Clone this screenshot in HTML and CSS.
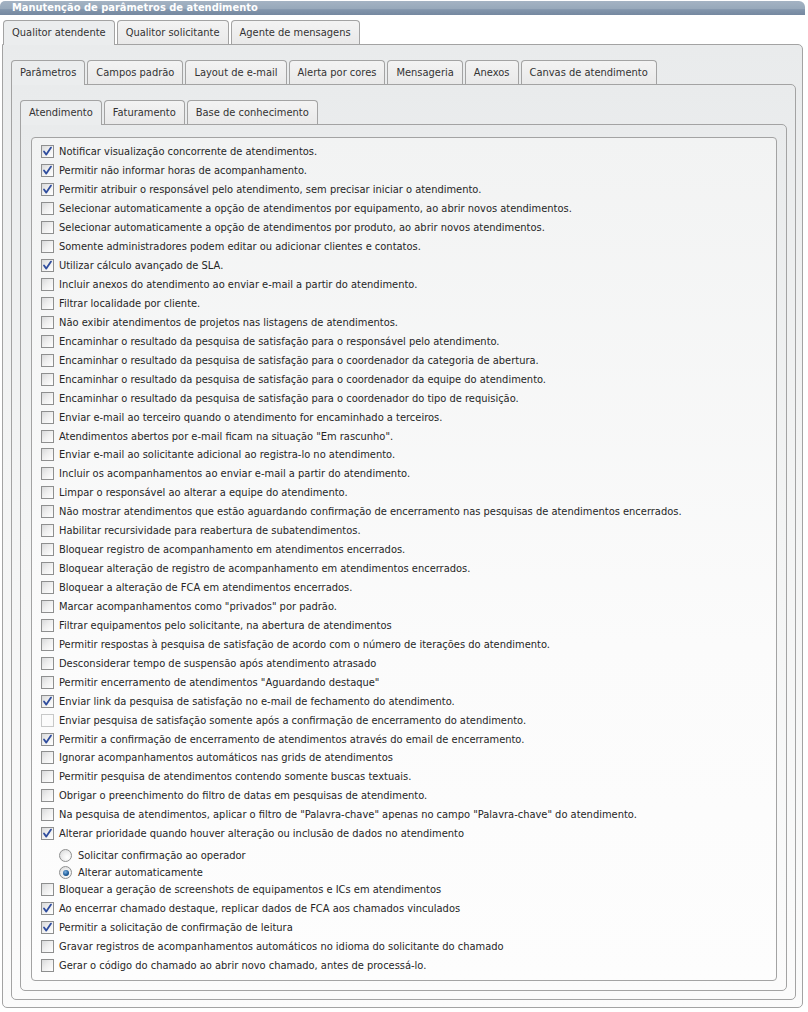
FILE: index.html
```html
<!DOCTYPE html>
<html lang="pt-BR">
<head>
<meta charset="utf-8">
<title>Manutenção de parâmetros de atendimento</title>
<link rel="stylesheet" href="styles.css">
</head>
<body>
<div class="titlebar">Manutenção de parâmetros de atendimento</div>

<div class="tabs tabs1">
  <span class="tab active">Qualitor atendente</span>
  <span class="tab">Qualitor solicitante</span>
  <span class="tab">Agente de mensagens</span>
</div>
<div class="panel panel1">
  <div class="tabs">
    <span class="tab active">Parâmetros</span>
    <span class="tab">Campos padrão</span>
    <span class="tab">Layout de e-mail</span>
    <span class="tab">Alerta por cores</span>
    <span class="tab">Mensageria</span>
    <span class="tab">Anexos</span>
    <span class="tab">Canvas de atendimento</span>
  </div>
  <div class="panel panel2">
    <div class="tabs">
      <span class="tab active">Atendimento</span>
      <span class="tab">Faturamento</span>
      <span class="tab">Base de conhecimento</span>
    </div>
    <div class="panel panel3">
      <div class="box">
        <label class="row"><span class="cb on"><svg viewBox="0 0 13 13"><path d="M3 6.5 5.3 9.6 10 2.6"/></svg></span>Notificar visualização concorrente de atendimentos.</label>
        <label class="row"><span class="cb on"><svg viewBox="0 0 13 13"><path d="M3 6.5 5.3 9.6 10 2.6"/></svg></span>Permitir não informar horas de acompanhamento.</label>
        <label class="row"><span class="cb on"><svg viewBox="0 0 13 13"><path d="M3 6.5 5.3 9.6 10 2.6"/></svg></span>Permitir atribuir o responsável pelo atendimento, sem precisar iniciar o atendimento.</label>
        <label class="row"><span class="cb"></span>Selecionar automaticamente a opção de atendimentos por equipamento, ao abrir novos atendimentos.</label>
        <label class="row"><span class="cb"></span>Selecionar automaticamente a opção de atendimentos por produto, ao abrir novos atendimentos.</label>
        <label class="row"><span class="cb"></span>Somente administradores podem editar ou adicionar clientes e contatos.</label>
        <label class="row"><span class="cb on"><svg viewBox="0 0 13 13"><path d="M3 6.5 5.3 9.6 10 2.6"/></svg></span>Utilizar cálculo avançado de SLA.</label>
        <label class="row"><span class="cb"></span>Incluir anexos do atendimento ao enviar e-mail a partir do atendimento.</label>
        <label class="row"><span class="cb"></span>Filtrar localidade por cliente.</label>
        <label class="row"><span class="cb"></span>Não exibir atendimentos de projetos nas listagens de atendimentos.</label>
        <label class="row"><span class="cb"></span>Encaminhar o resultado da pesquisa de satisfação para o responsável pelo atendimento.</label>
        <label class="row"><span class="cb"></span>Encaminhar o resultado da pesquisa de satisfação para o coordenador da categoria de abertura.</label>
        <label class="row"><span class="cb"></span>Encaminhar o resultado da pesquisa de satisfação para o coordenador da equipe do atendimento.</label>
        <label class="row"><span class="cb"></span>Encaminhar o resultado da pesquisa de satisfação para o coordenador do tipo de requisição.</label>
        <label class="row"><span class="cb"></span>Enviar e-mail ao terceiro quando o atendimento for encaminhado a terceiros.</label>
        <label class="row"><span class="cb"></span>Atendimentos abertos por e-mail ficam na situação "Em rascunho".</label>
        <label class="row"><span class="cb"></span>Enviar e-mail ao solicitante adicional ao registra-lo no atendimento.</label>
        <label class="row"><span class="cb"></span>Incluir os acompanhamentos ao enviar e-mail a partir do atendimento.</label>
        <label class="row"><span class="cb"></span>Limpar o responsável ao alterar a equipe do atendimento.</label>
        <label class="row"><span class="cb"></span>Não mostrar atendimentos que estão aguardando confirmação de encerramento nas pesquisas de atendimentos encerrados.</label>
        <label class="row"><span class="cb"></span>Habilitar recursividade para reabertura de subatendimentos.</label>
        <label class="row"><span class="cb"></span>Bloquear registro de acompanhamento em atendimentos encerrados.</label>
        <label class="row"><span class="cb"></span>Bloquear alteração de registro de acompanhamento em atendimentos encerrados.</label>
        <label class="row"><span class="cb"></span>Bloquear a alteração de FCA em atendimentos encerrados.</label>
        <label class="row"><span class="cb"></span>Marcar acompanhamentos como "privados" por padrão.</label>
        <label class="row"><span class="cb"></span>Filtrar equipamentos pelo solicitante, na abertura de atendimentos</label>
        <label class="row"><span class="cb"></span>Permitir respostas à pesquisa de satisfação de acordo com o número de iterações do atendimento.</label>
        <label class="row"><span class="cb"></span>Desconsiderar tempo de suspensão após atendimento atrasado</label>
        <label class="row"><span class="cb"></span>Permitir encerramento de atendimentos "Aguardando destaque"</label>
        <label class="row"><span class="cb on"><svg viewBox="0 0 13 13"><path d="M3 6.5 5.3 9.6 10 2.6"/></svg></span>Enviar link da pesquisa de satisfação no e-mail de fechamento do atendimento.</label>
        <label class="row"><span class="cb disabled"></span>Enviar pesquisa de satisfação somente após a confirmação de encerramento do atendimento.</label>
        <label class="row"><span class="cb on"><svg viewBox="0 0 13 13"><path d="M3 6.5 5.3 9.6 10 2.6"/></svg></span>Permitir a confirmação de encerramento de atendimentos através do email de encerramento.</label>
        <label class="row"><span class="cb"></span>Ignorar acompanhamentos automáticos nas grids de atendimentos</label>
        <label class="row"><span class="cb"></span>Permitir pesquisa de atendimentos contendo somente buscas textuais.</label>
        <label class="row"><span class="cb"></span>Obrigar o preenchimento do filtro de datas em pesquisas de atendimento.</label>
        <label class="row"><span class="cb"></span>Na pesquisa de atendimentos, aplicar o filtro de "Palavra-chave" apenas no campo "Palavra-chave" do atendimento.</label>
        <label class="row"><span class="cb on"><svg viewBox="0 0 13 13"><path d="M3 6.5 5.3 9.6 10 2.6"/></svg></span>Alterar prioridade quando houver alteração ou inclusão de dados no atendimento</label>
        <div class="radios">
          <label class="rrow"><span class="rb"></span>Solicitar confirmação ao operador</label>
          <label class="rrow"><span class="rb on"></span>Alterar automaticamente</label>
        </div>
        <label class="row"><span class="cb"></span>Bloquear a geração de screenshots de equipamentos e ICs em atendimentos</label>
        <label class="row"><span class="cb on"><svg viewBox="0 0 13 13"><path d="M3 6.5 5.3 9.6 10 2.6"/></svg></span>Ao encerrar chamado destaque, replicar dados de FCA aos chamados vinculados</label>
        <label class="row"><span class="cb on"><svg viewBox="0 0 13 13"><path d="M3 6.5 5.3 9.6 10 2.6"/></svg></span>Permitir a solicitação de confirmação de leitura</label>
        <label class="row"><span class="cb"></span>Gravar registros de acompanhamentos automáticos no idioma do solicitante do chamado</label>
        <label class="row"><span class="cb"></span>Gerar o código do chamado ao abrir novo chamado, antes de processá-lo.</label>
      </div>
    </div>
  </div>
</div>
</body>
</html>
```
FILE: styles.css
```css
html, body {
  margin: 0;
  padding: 0;
  background: #ffffff;
}
body {
  font-family: "DejaVu Sans Condensed", "DejaVu Sans", sans-serif;
  font-stretch: condensed;
  font-size: 11px;
  color: #262626;
  width: 808px;
}

.titlebar {
  margin-top: 1px;
  width: 793px;
  margin-right: 3px;
  height: 14px;
  line-height: 13px;
  padding-left: 12px;
  color: #ffffff;
  font-weight: bold;
  border-radius: 5px 6px 0 0;
  background: linear-gradient(#a4b3c3 0%, #97a8ba 55%, #8295ab 62%, #7588a0 100%);
}

.tabs {
  display: flex;
  align-items: flex-start;
  gap: 2px;
  height: 24px;
  position: relative;
  z-index: 1;
}
.tabs1 {
  margin-top: 5px;
  padding-left: 3px;
}
.tab {
  display: block;
  height: 23px;
  line-height: 24px;
  padding: 0 8px;
  border: 1px solid #a3a3a3;
  border-bottom: none;
  border-radius: 4px 4px 0 0;
  background: linear-gradient(#f3f3f3, #e9e9e9);
  color: #333333;
  white-space: nowrap;
}
.tab.active {
  height: 24px;
  background: #ebedee;
}

.panel {
  border: 1px solid #a3a3a3;
  border-radius: 0 5px 5px 5px;
  background: linear-gradient(#e9ebec 0px, #f3f4f4 400px, #fbfbfb 100%);
}
.panel1 {
  margin-left: 2px;
  width: 785px;
  padding: 15px 6px 7px 8px;
}
.panel2 {
  padding: 15px 8px 8px 8px;
}
.panel3 {
  padding: 12px 9px 9px 10px;
}

.box {
  border: 1px solid #a3a3a3;
  border-radius: 4px;
  background: linear-gradient(#f2f3f3, #fbfbfb 60%, #fdfdfd);
  padding: 4.5px 9px 5.5px 9px;
}

.row {
  display: flex;
  align-items: center;
  height: 18.94px;
  white-space: nowrap;
}
.cb {
  box-sizing: border-box;
  flex: none;
  width: 13px;
  height: 13px;
  margin-right: 5px;
  border: 1px solid #8e8f8f;
  background: linear-gradient(135deg, #d8d9da 0%, #eeeeee 45%, #ffffff 100%);
  position: relative;
}
.cb svg {
  position: absolute;
  left: -1px;
  top: -1px;
  width: 13px;
  height: 13px;
}
.cb svg path {
  fill: none;
  stroke: #2f4d9e;
  stroke-width: 1.8;
  stroke-linecap: round;
  stroke-linejoin: round;
}
.cb.disabled {
  border-color: #c7c8c8;
  background: #fbfbfb;
}

.radios {
  padding: 4px 0 0 18px;
  margin-bottom: -1px;
}
.rrow {
  display: flex;
  align-items: center;
  height: 17px;
  white-space: nowrap;
}
.rb {
  box-sizing: border-box;
  flex: none;
  width: 13px;
  height: 13px;
  margin-right: 6px;
  border-radius: 50%;
  border: 1px solid #8e8f8f;
  background: radial-gradient(circle at 65% 65%, #ffffff 0%, #f1f1f1 40%, #d4d5d6 100%);
  position: relative;
}
.rb.on::after {
  content: "";
  position: absolute;
  left: 2.5px;
  top: 2.5px;
  width: 6px;
  height: 6px;
  border-radius: 50%;
  background: radial-gradient(circle at 40% 35%, #7fb2e0 0%, #1f5e9c 55%, #0d2f55 100%);
}
```
